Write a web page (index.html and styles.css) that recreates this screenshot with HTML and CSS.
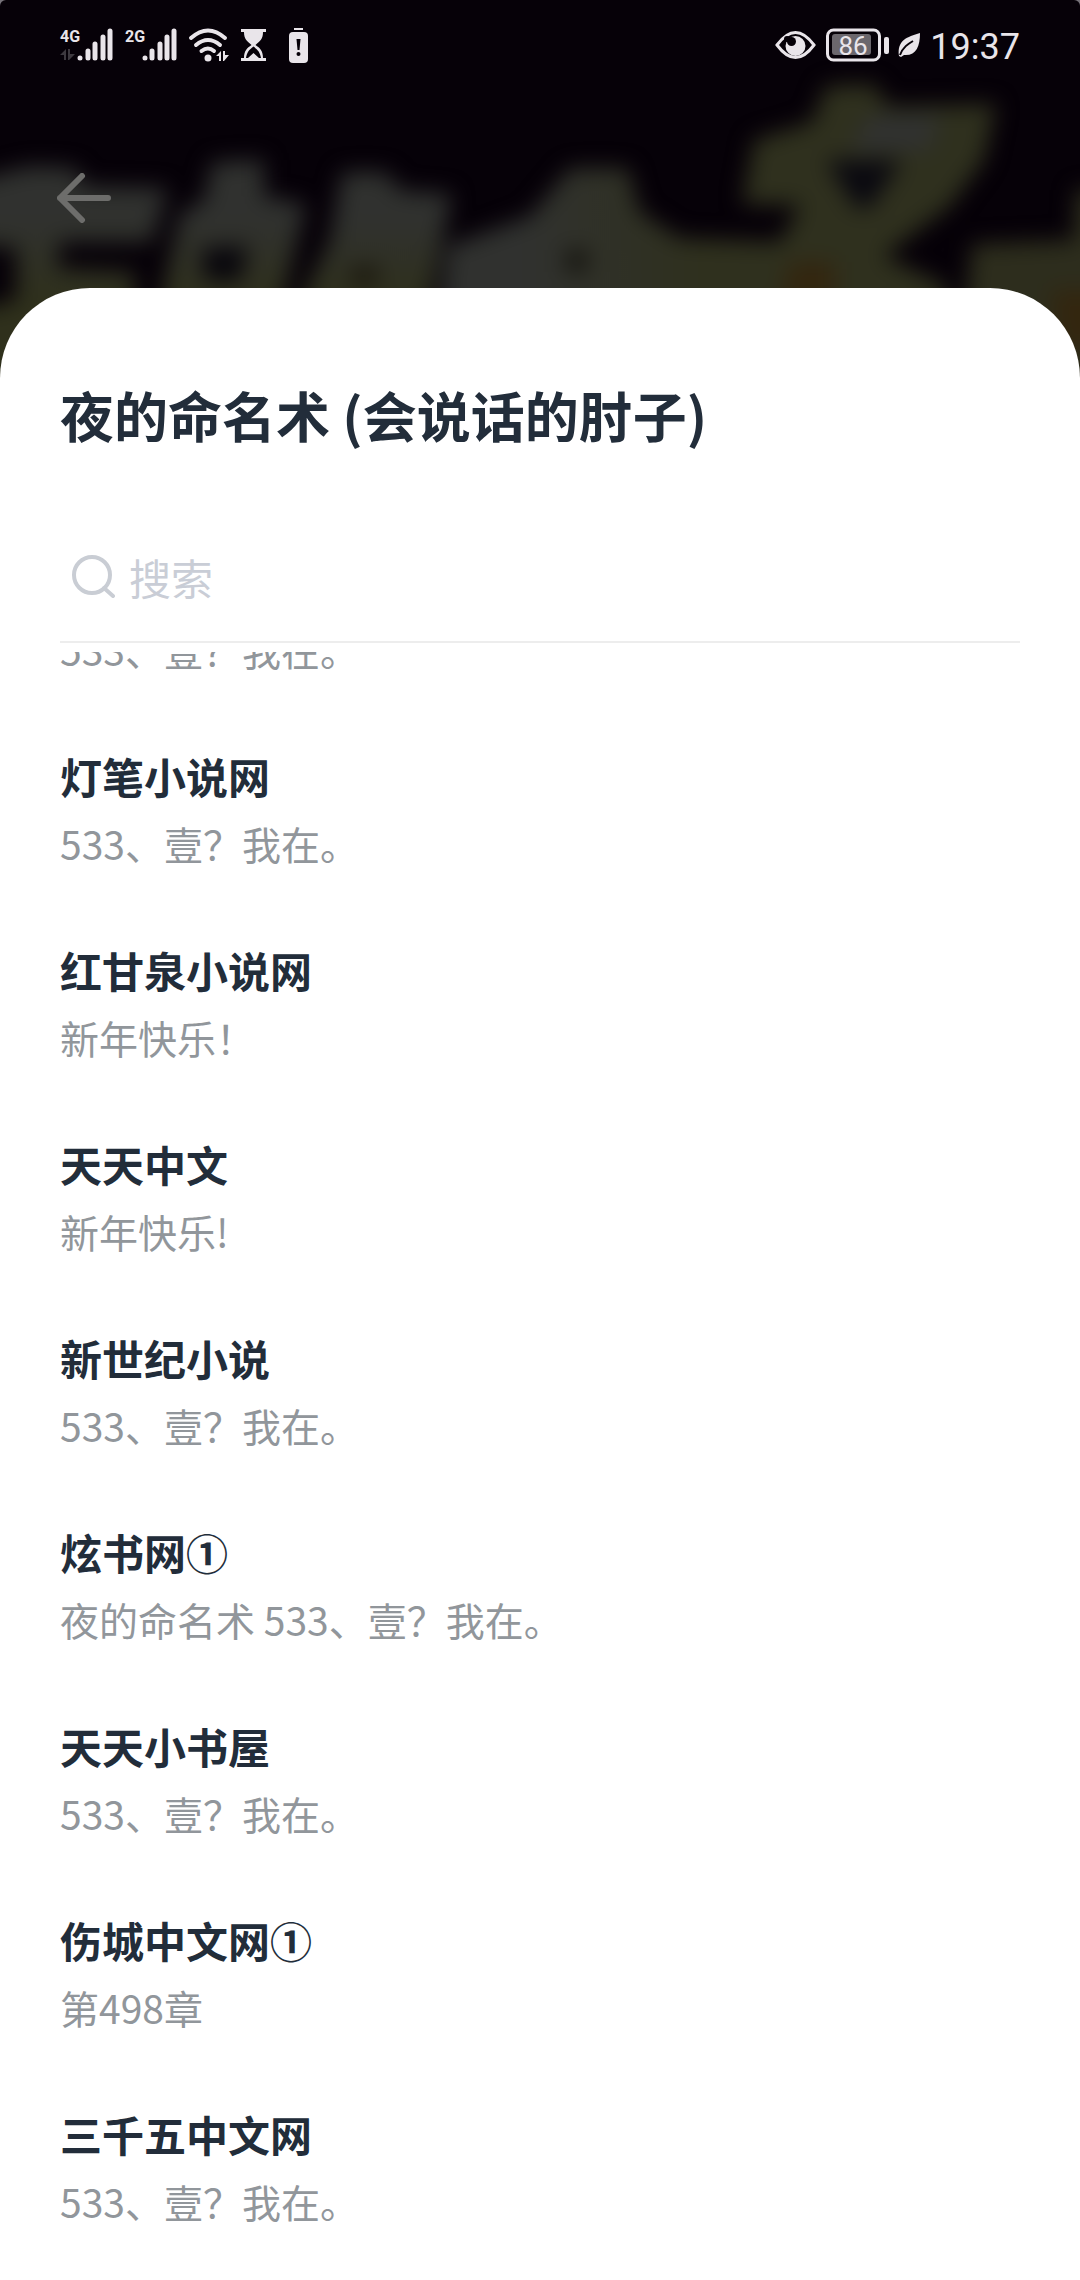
FILE: index.html
```html
<!DOCTYPE html>
<html lang="zh-CN">
<head>
    <meta charset="UTF-8">
    <meta name="viewport" content="width=device-width, initial-scale=1.0">
    <title>夜的命名术</title>
    <link rel="stylesheet" href="styles.css">
</head>
<body>
    <div class="page">
        <!-- Blurred book cover behind the header -->
        <svg class="cover" viewBox="0 0 1080 400" preserveAspectRatio="xMidYMin slice" aria-hidden="true">
            <defs>
                <filter id="blur" x="-10%" y="-10%" width="120%" height="120%" color-interpolation-filters="sRGB">
                    <feGaussianBlur stdDeviation="11"/>
                </filter>
                <linearGradient id="ink" gradientUnits="userSpaceOnUse" x1="0" y1="220" x2="0" y2="300">
                    <stop offset="0" stop-color="#30312f"/>
                    <stop offset="1" stop-color="#2f301c"/>
                </linearGradient>
                <linearGradient id="ink2" gradientUnits="userSpaceOnUse" x1="520" y1="0" x2="700" y2="0">
                    <stop offset="0" stop-color="#30312f"/>
                    <stop offset="1" stop-color="#2f301e"/>
                </linearGradient>
            </defs>
            <rect width="1080" height="400" fill="#060108"/>
            <g filter="url(#blur)">
                <path fill="url(#ink)" d="M-30 182 L30 166 L75 168 L85 186 L168 188 L152 242 L60 242 L58 268 L135 272 L132 400 L-30 400 L-30 310 L16 300 L16 248 L-30 244 Z"/>
                <path fill="url(#ink)" d="M212 162 L264 160 L264 196 L306 204 L280 310 L158 310 L180 214 L204 200 Z"/>
                <path fill="url(#ink)" d="M342 172 L386 172 L400 190 L452 194 L428 310 L296 310 L330 240 Z"/>
                <path fill="url(#ink2)" d="M440 310 L448 246 L530 216 L570 168 L628 168 L640 212 L680 238 L780 242 L800 205 L742 204 L754 140 L812 122 L826 86 L874 84 L888 106 L996 104 L984 160 L950 206 L884 256 L945 285 L950 310 Z"/>
                <path fill="#2d2d1d" d="M1076 190 L1110 190 L1110 400 L1040 400 L965 310 L972 244 L1074 240 Z"/>
                <path fill="#303130" d="M870 115 L940 115 L930 150 L850 150 Z"/>
                <path fill="#33260f" d="M790 262 L835 262 L835 300 L780 300 Z"/>
                <path fill="#33260f" d="M1050 290 L1100 290 L1100 350 L1060 350 Z"/>
                <path fill="#08060c" d="M202 248 L248 246 L240 282 L204 280 Z"/>
                <path fill="#1c190f" d="M352 266 L380 266 L376 286 L350 286 Z"/>
                <path fill="#15140f" d="M566 250 L588 250 L586 272 L566 272 Z"/>
                <path fill="#0a0910" d="M826 160 L902 160 L870 208 L856 208 Z"/>
            </g>
        </svg>

        <div class="status-bar">
            <div class="status-group">
                <svg class="icon" width="53" height="36" viewBox="0 0 53 36">
                    <text class="network" x="0" y="15">4G</text>
                    <path class="dim" d="M0 28 L6 22 V33 H4 V28 Z M8 22 H10 V27 H15 L9 33 H8 Z"/>
                    <path class="bars" d="M20 31 V31 M28 24 V31 M35 17 V31 M43 10 V31 M50 4 V31"/>
                </svg>
                <svg class="icon" width="52" height="36" viewBox="0 0 52 36">
                    <text class="network" x="0" y="15">2G</text>
                    <path class="bars" d="M20 31 V31 M27 24 V31 M35 17 V31 M42 10 V31 M49 4 V31"/>
                </svg>
                <svg class="icon" width="40" height="36" viewBox="0 0 40 36">
                    <path class="wave" d="M2 11 Q19 -4 36 11 M7 18 Q19 8 31 18 M12.500 24 Q19 19 25 24"/>
                    <circle cx="19" cy="31" r="3.500"/>
                    <path d="M27 29 L32 24 V34 H30 V29 Z M34 24 H36 V28 H40 L35 34 H34 Z"/>
                </svg>
                <svg class="icon" width="26" height="36" viewBox="0 0 26 36">
                    <path d="M0 2 H25 V5 H22 C22 12 19 14 14.500 18 C19 21 22 24 22 31 H25 V34 H0 V31 H3 C3 24 6 21 10.500 18 C6 14 3 12 3 5 H0 Z"/>
                    <path class="hole" d="M12.500 19.500 C8 23 6 25 5 31 H7 L12.500 26 L18 31 H20 C19 25 17 23 12.500 19.500 Z"/>
                </svg>
                <svg class="icon" width="30" height="36" viewBox="0 0 30 36">
                    <rect x="15" y="1" width="9" height="2"/>
                    <rect x="10" y="5" width="19" height="31" rx="4"/>
                    <path class="hole" d="M17.500 12 H21.500 L20.500 23 H18.500 Z"/>
                    <circle class="hole" cx="19.500" cy="27" r="2"/>
                </svg>
            </div>
            <div class="status-group status-right">
                <svg class="icon" width="41" height="36" viewBox="0 0 41 36">
                    <path class="outline" d="M2 18 Q20.500 -7 39 18 Q20.500 43 2 18 Z"/>
                    <circle cx="20.500" cy="19" r="10"/>
                    <circle class="hole" cx="16.500" cy="14.500" r="4.500"/>
                    <circle cx="12" cy="12" r="3" class="hole"/>
                </svg>
                <svg class="icon" width="63" height="36" viewBox="0 0 63 36">
                    <rect class="outline" x="1.500" y="3" width="52" height="30" rx="6"/>
                    <rect class="level" x="6" y="7" width="39" height="21" rx="3"/>
                    <rect x="58" y="10" width="5" height="17" rx="2"/>
                    <text class="percent" x="27" y="28">86</text>
                </svg>
                <svg class="icon" width="21" height="36" viewBox="0 0 21 36">
                    <path d="M21 6 C21 20 17 29 5 28 L2 30 L0 29 C-2 13 8 10 21 6 Z"/>
                    <path class="vein" d="M1 28 C4 20 9 17 14 14"/>
                </svg>
                <span class="clock">19:37</span>
            </div>
        </div>

        <div class="top-bar">
            <button class="back" type="button" aria-label="返回">
                <svg width="54" height="50" viewBox="0 0 54 50">
                    <path d="M25 3 L3 25 L25 47 M3 25 H51"/>
                </svg>
            </button>
        </div>

        <main class="sheet">
            <h1>夜的命名术 (会说话的肘子)</h1>
            <label class="search">
                <svg width="44" height="44" viewBox="0 0 44 44" aria-hidden="true">
                    <circle cx="21" cy="21" r="18"/>
                    <path d="M33 34 L42 42"/>
                </svg>
                <input type="search" placeholder="搜索" aria-label="搜索">
            </label>
            <div class="list-view">
                <ul class="sources">
                    <li><h2>笔趣阁</h2><p>533、壹？我在。</p></li>
                    <li><h2>灯笔小说网</h2><p>533、壹？我在。</p></li>
                    <li><h2>红甘泉小说网</h2><p>新年快乐！</p></li>
                    <li><h2>天天中文</h2><p>新年快乐!</p></li>
                    <li><h2>新世纪小说</h2><p>533、壹？我在。</p></li>
                    <li><h2>炫书网①</h2><p>夜的命名术 533、壹？我在。</p></li>
                    <li><h2>天天小书屋</h2><p>533、壹？我在。</p></li>
                    <li><h2>伤城中文网①</h2><p>第498章</p></li>
                    <li><h2>三千五中文网</h2><p>533、壹？我在。</p></li>
                </ul>
            </div>
        </main>
    </div>
</body>
</html>
```
FILE: styles.css
```css
* {
    box-sizing: border-box;
}
body {
    margin: 0;
    background-color: #77737a;
    font-family: "Noto Sans CJK SC", sans-serif;
}
h1, h2, p, ul {
    margin: 0;
    padding: 0;
}
.page {
    position: relative;
    display: flex;
    flex-direction: column;
    min-height: 100vh;
    overflow: hidden;
    border-radius: 6px 6px 0 0;
}
.cover {
    position: absolute;
    top: 0;
    left: 0;
    width: 100%;
    height: 400px;
}

/* Status bar */
.status-bar {
    position: relative;
    display: flex;
    justify-content: space-between;
    height: 90px;
    padding: 0 60px;
}
.status-group {
    display: flex;
    align-items: center;
    gap: 12px;
}
.status-right {
    gap: 10px;
}
.icon {
    fill: #e9e5ea;
    overflow: visible;
}
.network {
    font: bold 16px Roboto, sans-serif;
}
.bars {
    stroke: #e9e5ea;
    stroke-width: 5;
    stroke-linecap: round;
}
.wave {
    fill: none;
    stroke: #e9e5ea;
    stroke-width: 4;
    stroke-linecap: round;
}
.outline {
    fill: none;
    stroke: #e9e5ea;
    stroke-width: 3;
}
.dim {
    fill: #3d393f;
}
.hole {
    fill: #060108;
}
.level {
    fill: #6b676d;
}
.percent {
    font: 26px Roboto, sans-serif;
    text-anchor: middle;
}
.vein {
    fill: none;
    stroke: #060108;
    stroke-width: 2;
}
.clock {
    padding-top: 4px;
    color: #e9e5ea;
    font: 36px Roboto, sans-serif;
}

/* Header */
.top-bar {
    position: relative;
    display: flex;
    align-items: center;
    height: 198px;
    padding: 18px 57px 0;
}
.back {
    display: flex;
    padding: 0;
    border: 0;
    background: none;
}
.back path {
    fill: none;
    stroke: #6d6d6b;
    stroke-width: 6;
    stroke-linecap: round;
    stroke-linejoin: round;
}

/* Sheet */
.sheet {
    position: relative;
    flex: 1;
    padding: 90px 60px 0;
    border-radius: 90px 90px 0 0;
    background-color: #fff;
}
h1 {
    color: #222d3a;
    font-size: 54px;
    font-weight: 700;
    line-height: 74px;
}
.search {
    display: flex;
    align-items: center;
    gap: 14px;
    height: 132px;
    margin-top: 59px;
    padding-left: 11px;
    border-bottom: 2px solid #ededed;
}
.search svg {
    fill: none;
    stroke: #c9cdd4;
    stroke-width: 4;
    stroke-linecap: round;
}
.search input {
    flex: 1;
    min-width: 0;
    height: 72px;
    padding: 0;
    border: 0;
    outline: 0;
    background: none;
    font-family: inherit;
    font-size: 42px;
}
.search input::placeholder {
    color: #c9cdd6;
}
.list-view {
    margin-top: 9px;
    overflow: hidden;
}
/* The list is scrolled part-way through its first entry */
.sources {
    margin-top: -135px;
    list-style: none;
}
.sources li {
    padding: 30px 0;
}
.sources h2 {
    color: #222d3a;
    font-size: 42px;
    font-weight: 700;
    line-height: 70px;
}
.sources p {
    color: #91969b;
    font-size: 39px;
    line-height: 64px;
}
```
